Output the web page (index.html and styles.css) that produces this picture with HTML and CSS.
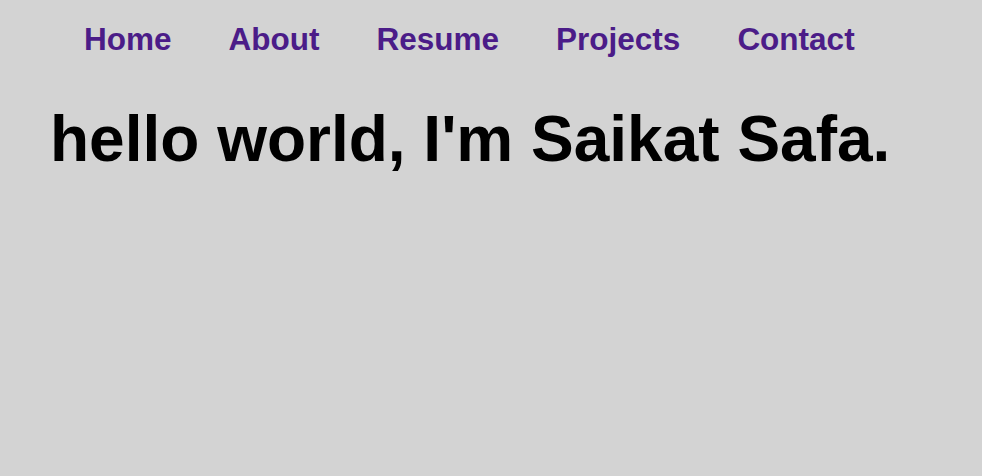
FILE: index.html
```html
<!DOCTYPE html>
<html>
<head>
<meta charset="utf-8">
<link rel="stylesheet" href="styles.css">
</head>
<body>
<nav class="nav">
  <a class="nav-link" href="#">Home</a>
  <a class="nav-link" href="#">About</a>
  <a class="nav-link" href="#">Resume</a>
  <a class="nav-link" href="#">Projects</a>
  <a class="nav-link" href="#">Contact</a>
</nav>
<h1 class="title">hello world, I'm Saikat Safa.</h1>
</body>
</html>
```
FILE: styles.css
```css
html, body {
  margin: 0;
  padding: 0;
  background: #d3d3d3;
  height: 100%;
}
body {
  font-family: "Liberation Sans", Arial, sans-serif;
}
.nav {
  display: flex;
  gap: 57px;
  padding: 21px 0 0 84px;
}
.nav-link {
  font-size: 31.5px;
  font-weight: bold;
  color: #4b1c88;
  text-decoration: none;
  line-height: 37px;
}
.title {
  margin: 44px 0 0 50px;
  font-size: 64px;
  font-weight: bold;
  color: #000;
  line-height: 74px;
}
```
